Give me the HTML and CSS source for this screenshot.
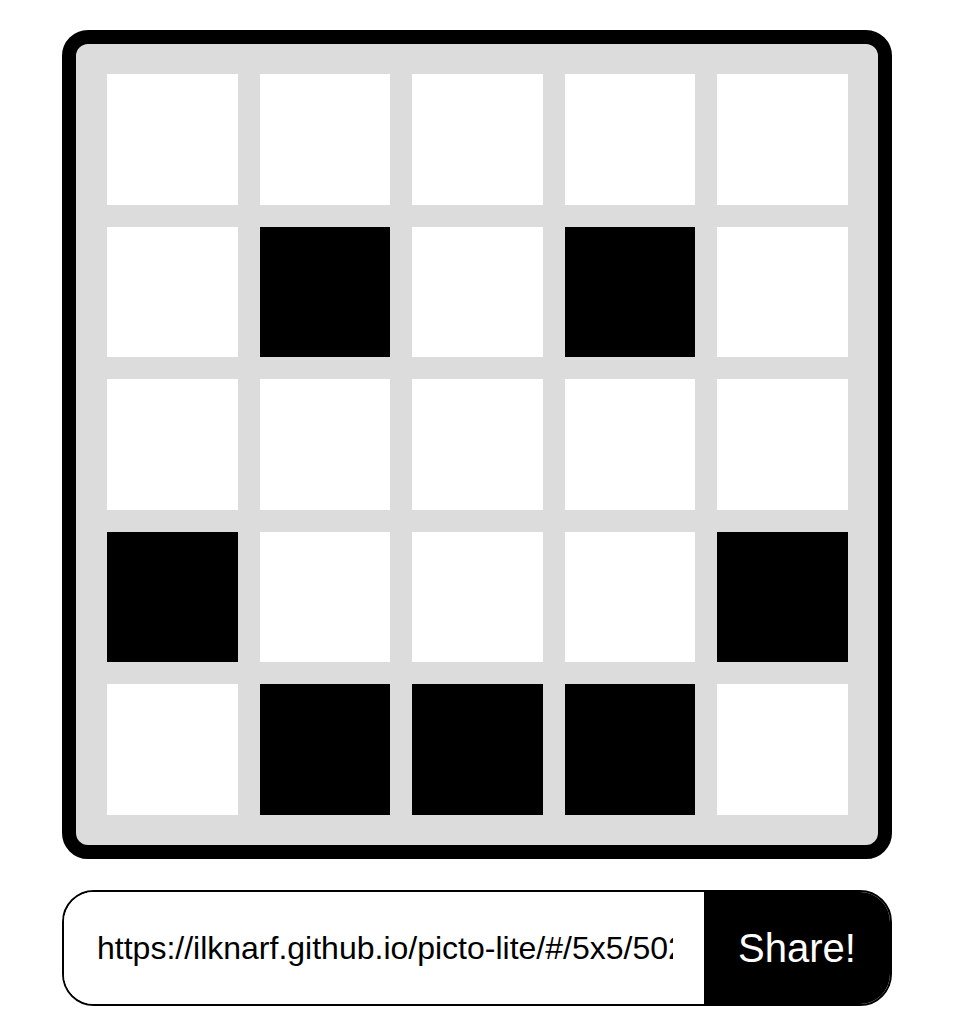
FILE: index.html
```html
<!DOCTYPE html>
<html>
<head>
<meta charset="utf-8">
<link rel="stylesheet" href="styles.css">
</head>
<body>
<main class="app">
  <div class="board">
    <div class="grid">
      <div class="cell"></div><div class="cell"></div><div class="cell"></div><div class="cell"></div><div class="cell"></div>
      <div class="cell"></div><div class="cell on"></div><div class="cell"></div><div class="cell on"></div><div class="cell"></div>
      <div class="cell"></div><div class="cell"></div><div class="cell"></div><div class="cell"></div><div class="cell"></div>
      <div class="cell on"></div><div class="cell"></div><div class="cell"></div><div class="cell"></div><div class="cell on"></div>
      <div class="cell"></div><div class="cell on"></div><div class="cell on"></div><div class="cell on"></div><div class="cell"></div>
    </div>
  </div>
  <div class="share">
    <input class="url" type="text" readonly value="https://ilknarf.github.io/picto-lite/#/5x5/5022000000000000">
    <button class="btn">Share!</button>
  </div>
</main>
</body>
</html>
```
FILE: styles.css
```css
html, body {
  margin: 0;
  padding: 0;
  background: #fff;
  font-family: "Liberation Sans", Arial, sans-serif;
}
.app {
  width: 830px;
  padding: 30px 0 0 62px;
  display: flex;
  flex-direction: column;
  gap: 31px;
}
.board {
  box-sizing: border-box;
  width: 830px;
  height: 829px;
  border: 14px solid #000;
  border-radius: 26px;
  background: #dcdcdc;
  padding: 30px 30px 30px 31px;
}
.grid {
  display: grid;
  grid-template-columns: repeat(5, 1fr);
  grid-template-rows: repeat(5, 1fr);
  gap: 22px;
  height: 100%;
}
.cell {
  background: #fff;
}
.cell.on {
  background: #000;
}
.share {
  box-sizing: border-box;
  width: 830px;
  height: 116px;
  border: 2px solid #000;
  border-radius: 32px;
  display: flex;
  overflow: hidden;
}
.url {
  flex: 1;
  min-width: 0;
  border: none;
  outline: none;
  padding: 0 31px 0 33px;
  font-family: "Liberation Sans", Arial, sans-serif;
  font-size: 32px;
  color: #000;
  background: #fff;
}
.btn {
  width: 186px;
  border: none;
  background: #000;
  color: #fff;
  font-family: "Liberation Sans", Arial, sans-serif;
  font-size: 40px;
  padding: 0;
}
```
